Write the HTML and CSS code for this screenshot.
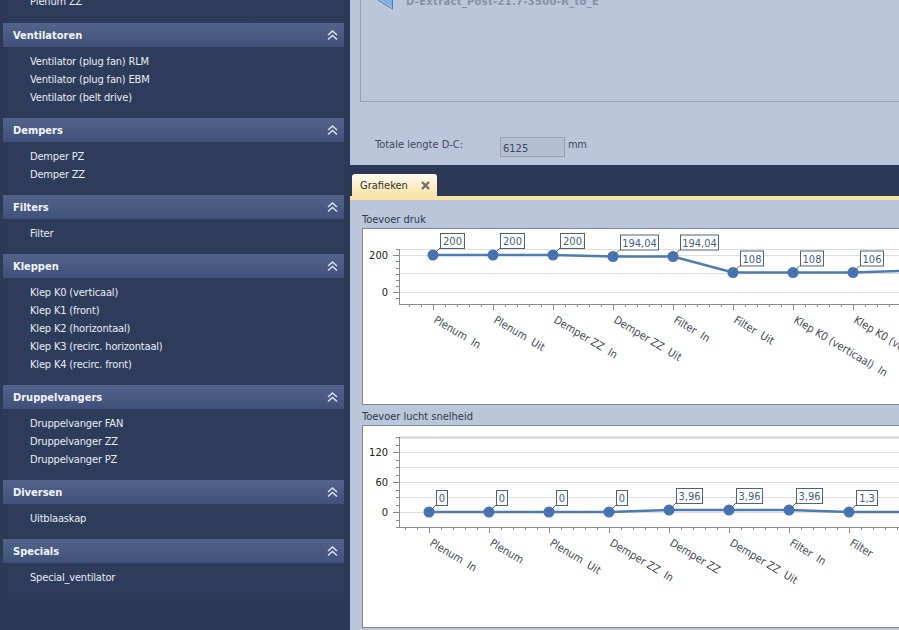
FILE: index.html
```html
<!DOCTYPE html>
<html lang="en">
<head>
  <meta charset="UTF-8" />
  <title>Grafieken</title>
  <link rel="stylesheet" href="styles.css">
</head>
<body>
  <div class="app">
    <aside class="sidebar">
      <div class="group-body group-body-first">
        <div class="item">Plenum ZZ</div>
      </div>

      <div class="group-head"><span>Ventilatoren</span><svg class="chevrons" viewBox="0 0 13 12"><path d="M2 6 6.5 2 11 6M2 10.5 6.5 6.5 11 10.5"/></svg></div>
      <div class="group-body">
        <div class="item">Ventilator (plug fan) RLM</div>
        <div class="item">Ventilator (plug fan) EBM</div>
        <div class="item">Ventilator (belt drive)</div>
      </div>

      <div class="group-head"><span>Dempers</span><svg class="chevrons" viewBox="0 0 13 12"><path d="M2 6 6.5 2 11 6M2 10.5 6.5 6.5 11 10.5"/></svg></div>
      <div class="group-body">
        <div class="item">Demper PZ</div>
        <div class="item">Demper ZZ</div>
      </div>

      <div class="group-head"><span>Filters</span><svg class="chevrons" viewBox="0 0 13 12"><path d="M2 6 6.5 2 11 6M2 10.5 6.5 6.5 11 10.5"/></svg></div>
      <div class="group-body">
        <div class="item">Filter</div>
      </div>

      <div class="group-head"><span>Kleppen</span><svg class="chevrons" viewBox="0 0 13 12"><path d="M2 6 6.5 2 11 6M2 10.5 6.5 6.5 11 10.5"/></svg></div>
      <div class="group-body">
        <div class="item">Klep K0 (verticaal)</div>
        <div class="item">Klep K1 (front)</div>
        <div class="item">Klep K2 (horizontaal)</div>
        <div class="item">Klep K3 (recirc. horizontaal)</div>
        <div class="item">Klep K4 (recirc. front)</div>
      </div>

      <div class="group-head"><span>Druppelvangers</span><svg class="chevrons" viewBox="0 0 13 12"><path d="M2 6 6.5 2 11 6M2 10.5 6.5 6.5 11 10.5"/></svg></div>
      <div class="group-body">
        <div class="item">Druppelvanger FAN</div>
        <div class="item">Druppelvanger ZZ</div>
        <div class="item">Druppelvanger PZ</div>
      </div>

      <div class="group-head"><span>Diversen</span><svg class="chevrons" viewBox="0 0 13 12"><path d="M2 6 6.5 2 11 6M2 10.5 6.5 6.5 11 10.5"/></svg></div>
      <div class="group-body">
        <div class="item">Uitblaaskap</div>
      </div>

      <div class="group-head"><span>Specials</span><svg class="chevrons" viewBox="0 0 13 12"><path d="M2 6 6.5 2 11 6M2 10.5 6.5 6.5 11 10.5"/></svg></div>
      <div class="group-body">
        <div class="item">Special_ventilator</div>
      </div>
    </aside>

    <main class="main">
      <section class="top-panel">
        <div class="part-box">
          <svg class="part-icon" viewBox="0 0 18 10"><path d="M1 0 15 8 17 0Z" fill="#a9c8ea"/><path d="M3 0 15 7V0Z" fill="#7fb0e2"/><path d="M15.5 0V9L1 0" fill="none" stroke="#4a7fb8"/></svg>
          <span class="part-name">D-Extract_Post-21.7-3500-R_to_E</span>
        </div>
        <div class="length-row">
          <label class="length-label">Totale lengte D-C:</label>
          <div class="length-value">6125</div>
          <span class="length-unit">mm</span>
        </div>
      </section>

      <div class="tab-strip">
        <div class="tab">
          <span>Grafieken</span>
          <svg class="tab-close" viewBox="0 0 9 9"><path d="M1 1 8 8M8 1 1 8"/></svg>
        </div>
      </div>

      <section class="charts">
        <h3 class="chart-title">Toevoer druk</h3>
        <div class="chart-box chart-box-druk"><svg id="chart-druk" class="chart" width="537" height="175"></svg></div>
        <h3 class="chart-title">Toevoer lucht snelheid</h3>
        <div class="chart-box chart-box-snelheid"><svg id="chart-snelheid" class="chart" width="537" height="201"></svg></div>
      </section>
    </main>
  </div>
  <script src="chart.js"></script>
</body>
</html>
```
FILE: styles.css
```css
html, body {
  margin: 0;
  padding: 0;
  overflow: hidden;
  background: #2c3a58;
  font-family: "DejaVu Sans Condensed", "DejaVu Sans", sans-serif;
  font-stretch: condensed;
  font-size: 11px;
}
.app {
  display: flex;
  width: 899px;
  height: 630px;
  overflow: hidden;
}

/* left toolbox */
.sidebar {
  width: 350px;
  flex: none;
  padding: 0 6px 0 3px;
  box-sizing: border-box;
  overflow: hidden;
  background: #2c3a58;
  color: #e8edf5;
}
.group-head {
  display: flex;
  align-items: center;
  justify-content: space-between;
  height: 24px;
  padding: 0 5px 0 10px;
  background: linear-gradient(#52648a, #3f517a);
  color: #f2f5fa;
  font-weight: bold;
  font-size: 11px;
}
.chevrons {
  width: 13px;
  height: 12px;
  fill: none;
  stroke: #dfe6f0;
  stroke-width: 1.4;
}
.group-body {
  padding: 6px 0 11px 22px;
  margin-left: 5px;
  background: conic-gradient(#30405f 25%, #2a3855 0 50%, #30405f 0 75%, #2a3855 0) 0 0 / 2px 2px;
  letter-spacing: -0.17px;
}
.group-body-first {
  margin-top: -7px;
  padding-top: 0;
  padding-bottom: 12px;
}
.item {
  height: 18px;
  line-height: 18px;
  white-space: nowrap;
}

/* right side */
.main {
  flex: 1;
  min-width: 0;
  display: flex;
  flex-direction: column;
  overflow: hidden;
}
.top-panel {
  height: 165px;
  flex: none;
  box-sizing: border-box;
  padding-left: 10px;
  background: #bac6d9;
  color: #3d4a5c;
}
.part-box {
  height: 102px;
  margin-right: -20px;
  box-sizing: border-box;
  border: 1px solid #96a3b7;
  border-top: 0;
  display: flex;
  align-items: flex-start;
  padding-left: 16px;
}
.part-icon {
  width: 18px;
  height: 10px;
  flex: none;
}
.part-name {
  margin: -5px 0 0 11px;
  color: #8592a6;
  font-weight: bold;
  font-size: 11px;
  line-height: 14px;
  letter-spacing: 0.35px;
}
.length-row {
  display: flex;
  align-items: center;
  margin-top: 35px;
  padding-left: 15px;
}
.length-label {
  width: 125px;
  padding-bottom: 6px;
}
.length-value {
  width: 65px;
  height: 20px;
  box-sizing: border-box;
  border: 1px solid #97a4b8;
  padding: 4px 0 0 2px;
  background: #b3bfd2;
}
.length-unit {
  margin-left: 3px;
  padding-bottom: 6px;
  letter-spacing: -0.4px;
}
.tab-strip {
  height: 35px;
  flex: none;
  box-sizing: border-box;
  padding: 9px 0 0 2px;
  background: #2a3955;
  border-bottom: 4px solid #fbe3a6;
}
.tab {
  display: flex;
  align-items: center;
  justify-content: space-between;
  width: 85px;
  height: 22px;
  box-sizing: border-box;
  padding: 0 7px 0 8px;
  border-radius: 3px 3px 0 0;
  background: linear-gradient(#fdfaf0, #fbe3a6);
  color: #333;
}
.tab-close {
  width: 9px;
  height: 9px;
  fill: none;
  stroke: #6f6f6f;
  stroke-width: 2.4;
}
.charts {
  flex: 1;
  padding-left: 12px;
  background: #bac6d9;
}
.chart-title {
  margin: 0;
  height: 13px;
  line-height: 13px;
  font-size: 11px;
  font-weight: normal;
  color: #2c3a4c;
}
.charts .chart-title:first-child {
  margin-top: 13px;
  margin-bottom: 2px;
}
.chart-box {
  width: 560px;
  box-sizing: border-box;
  border: 1px solid #7e8a9b;
  background: #fff;
}
.chart-box-druk {
  height: 177px;
  margin-bottom: 5px;
}
.chart-box-snelheid {
  height: 203px;
  margin-top: 2px;
}
.chart {
  display: block;
}
.grid {
  stroke: #dedede;
  stroke-width: 1.2;
}
.grid-top {
  stroke: #d2d2d2;
  stroke-width: 2;
}
.axis {
  stroke: #8a8a8a;
  stroke-width: 1;
}
.series {
  fill: none;
  stroke: #4d7cb1;
  stroke-width: 2.5;
}
.marker {
  fill: #4774b0;
}
.value-box {
  fill: #fff;
  stroke: #4f6378;
}
.leader {
  stroke: #4f6378;
}
.value-text {
  fill: #44617f;
  font-size: 11px;
  text-anchor: middle;
}
.y-text {
  fill: #222;
  font-size: 11px;
  text-anchor: end;
}
.x-text {
  fill: #454a55;
  font-size: 11px;
  white-space: pre;
}
```
FILE: chart.js
```js
const NS = 'http://www.w3.org/2000/svg';

function add(svg, tag, attrs, text) {
  const el = document.createElementNS(NS, tag);
  for (const key in attrs) el.setAttribute(key, attrs[key]);
  if (text !== undefined) el.textContent = text;
  svg.appendChild(el);
  return el;
}

function drawChart(svg, c) {
  const right = 537;

  c.grid.forEach(y => add(svg, 'line', { x1: c.left, x2: right, y1: y + 0.5, y2: y + 0.5, class: 'grid' }));
  if (c.topLine) add(svg, 'line', { x1: c.left, x2: right, y1: c.top + 0.5, y2: c.top + 0.5, class: 'grid-top' });

  // y axis and its ticks
  add(svg, 'line', { x1: c.left + 0.5, x2: c.left + 0.5, y1: c.top, y2: c.bottom, class: 'axis' });
  for (let y = c.minorFrom; y <= c.bottom; y += c.minorY) {
    add(svg, 'line', { x1: c.left - 3, x2: c.left, y1: Math.round(y) + 0.5, y2: Math.round(y) + 0.5, class: 'axis' });
  }
  c.yLabels.forEach(l => {
    add(svg, 'line', { x1: c.left - 6, x2: c.left, y1: l.y + 0.5, y2: l.y + 0.5, class: 'axis' });
    add(svg, 'text', { x: c.left - 11, y: l.y + 4, class: 'y-text' }, l.text);
  });

  // x axis and its ticks
  add(svg, 'line', { x1: c.left, x2: right, y1: c.bottom + 0.5, y2: c.bottom + 0.5, class: 'axis' });
  for (let x = c.points[0].x - 60; x < right; x += 12) {
    if (x > c.left) add(svg, 'line', { x1: x + 0.5, x2: x + 0.5, y1: c.bottom, y2: c.bottom + 3, class: 'axis' });
  }
  c.points.forEach(p => {
    add(svg, 'line', { x1: p.x + 0.5, x2: p.x + 0.5, y1: c.bottom, y2: c.bottom + 6, class: 'axis' });
  });

  // rotated names under the axis
  c.points.forEach(p => {
    if (!p.name) return;
    const y = c.bottom + 18;
    add(svg, 'text', { x: p.x, y: y, transform: `rotate(31 ${p.x} ${y})`, class: 'x-text' }, p.name);
  });

  add(svg, 'polyline', { points: c.points.map(p => `${p.x},${p.y}`).join(' '), class: 'series' });

  c.points.forEach(p => {
    add(svg, 'circle', { cx: p.x, cy: p.y, r: 5.5, class: 'marker' });
    if (!p.value) return;
    const boxX = p.x + 7;
    const boxY = p.y - 22;
    add(svg, 'line', { x1: p.x, y1: p.y, x2: boxX, y2: boxY + 15, class: 'leader' });
    add(svg, 'rect', { x: boxX + 0.5, y: boxY + 0.5, width: p.w, height: 15, class: 'value-box' });
    add(svg, 'text', { x: boxX + 0.5 + p.w / 2, y: boxY + 12, class: 'value-text' }, p.value);
  });
}

drawChart(document.getElementById('chart-druk'), {
  left: 36, top: 20, bottom: 75, minorFrom: 20, minorY: 6.17,
  grid: [20, 26, 44, 63],
  yLabels: [{ y: 26, text: '200' }, { y: 63, text: '0' }],
  points: [
    { x: 70, y: 26, value: '200', w: 24, name: 'Plenum  In' },
    { x: 130, y: 26, value: '200', w: 24, name: 'Plenum  Uit' },
    { x: 190, y: 26, value: '200', w: 24, name: 'Demper ZZ  In' },
    { x: 250, y: 27.5, value: '194,04', w: 38, name: 'Demper ZZ  Uit' },
    { x: 310, y: 27.5, value: '194,04', w: 38, name: 'Filter  In' },
    { x: 370, y: 43.5, value: '108', w: 23, name: 'Filter  Uit' },
    { x: 430, y: 43.5, value: '108', w: 23, name: 'Klep K0 (verticaal)  In' },
    { x: 490, y: 43.5, value: '106', w: 23, name: 'Klep K0 (verticaal)  Uit' },
    { x: 550, y: 41.5 }
  ]
});

drawChart(document.getElementById('chart-snelheid'), {
  left: 36, top: 11, bottom: 101, minorFrom: 11, minorY: 7.5, topLine: true,
  grid: [26, 41, 56, 71, 86],
  yLabels: [{ y: 26, text: '120' }, { y: 56, text: '60' }, { y: 86, text: '0' }],
  points: [
    { x: 66, y: 86, value: '0', w: 11, name: 'Plenum  In' },
    { x: 126, y: 86, value: '0', w: 11, name: 'Plenum' },
    { x: 186, y: 86, value: '0', w: 11, name: 'Plenum  Uit' },
    { x: 246, y: 86, value: '0', w: 11, name: 'Demper ZZ  In' },
    { x: 306, y: 84, value: '3,96', w: 26, name: 'Demper ZZ' },
    { x: 366, y: 84, value: '3,96', w: 26, name: 'Demper ZZ  Uit' },
    { x: 426, y: 84, value: '3,96', w: 26, name: 'Filter  In' },
    { x: 486, y: 86, value: '1,3', w: 21, name: 'Filter' },
    { x: 546, y: 86 }
  ]
});
```
